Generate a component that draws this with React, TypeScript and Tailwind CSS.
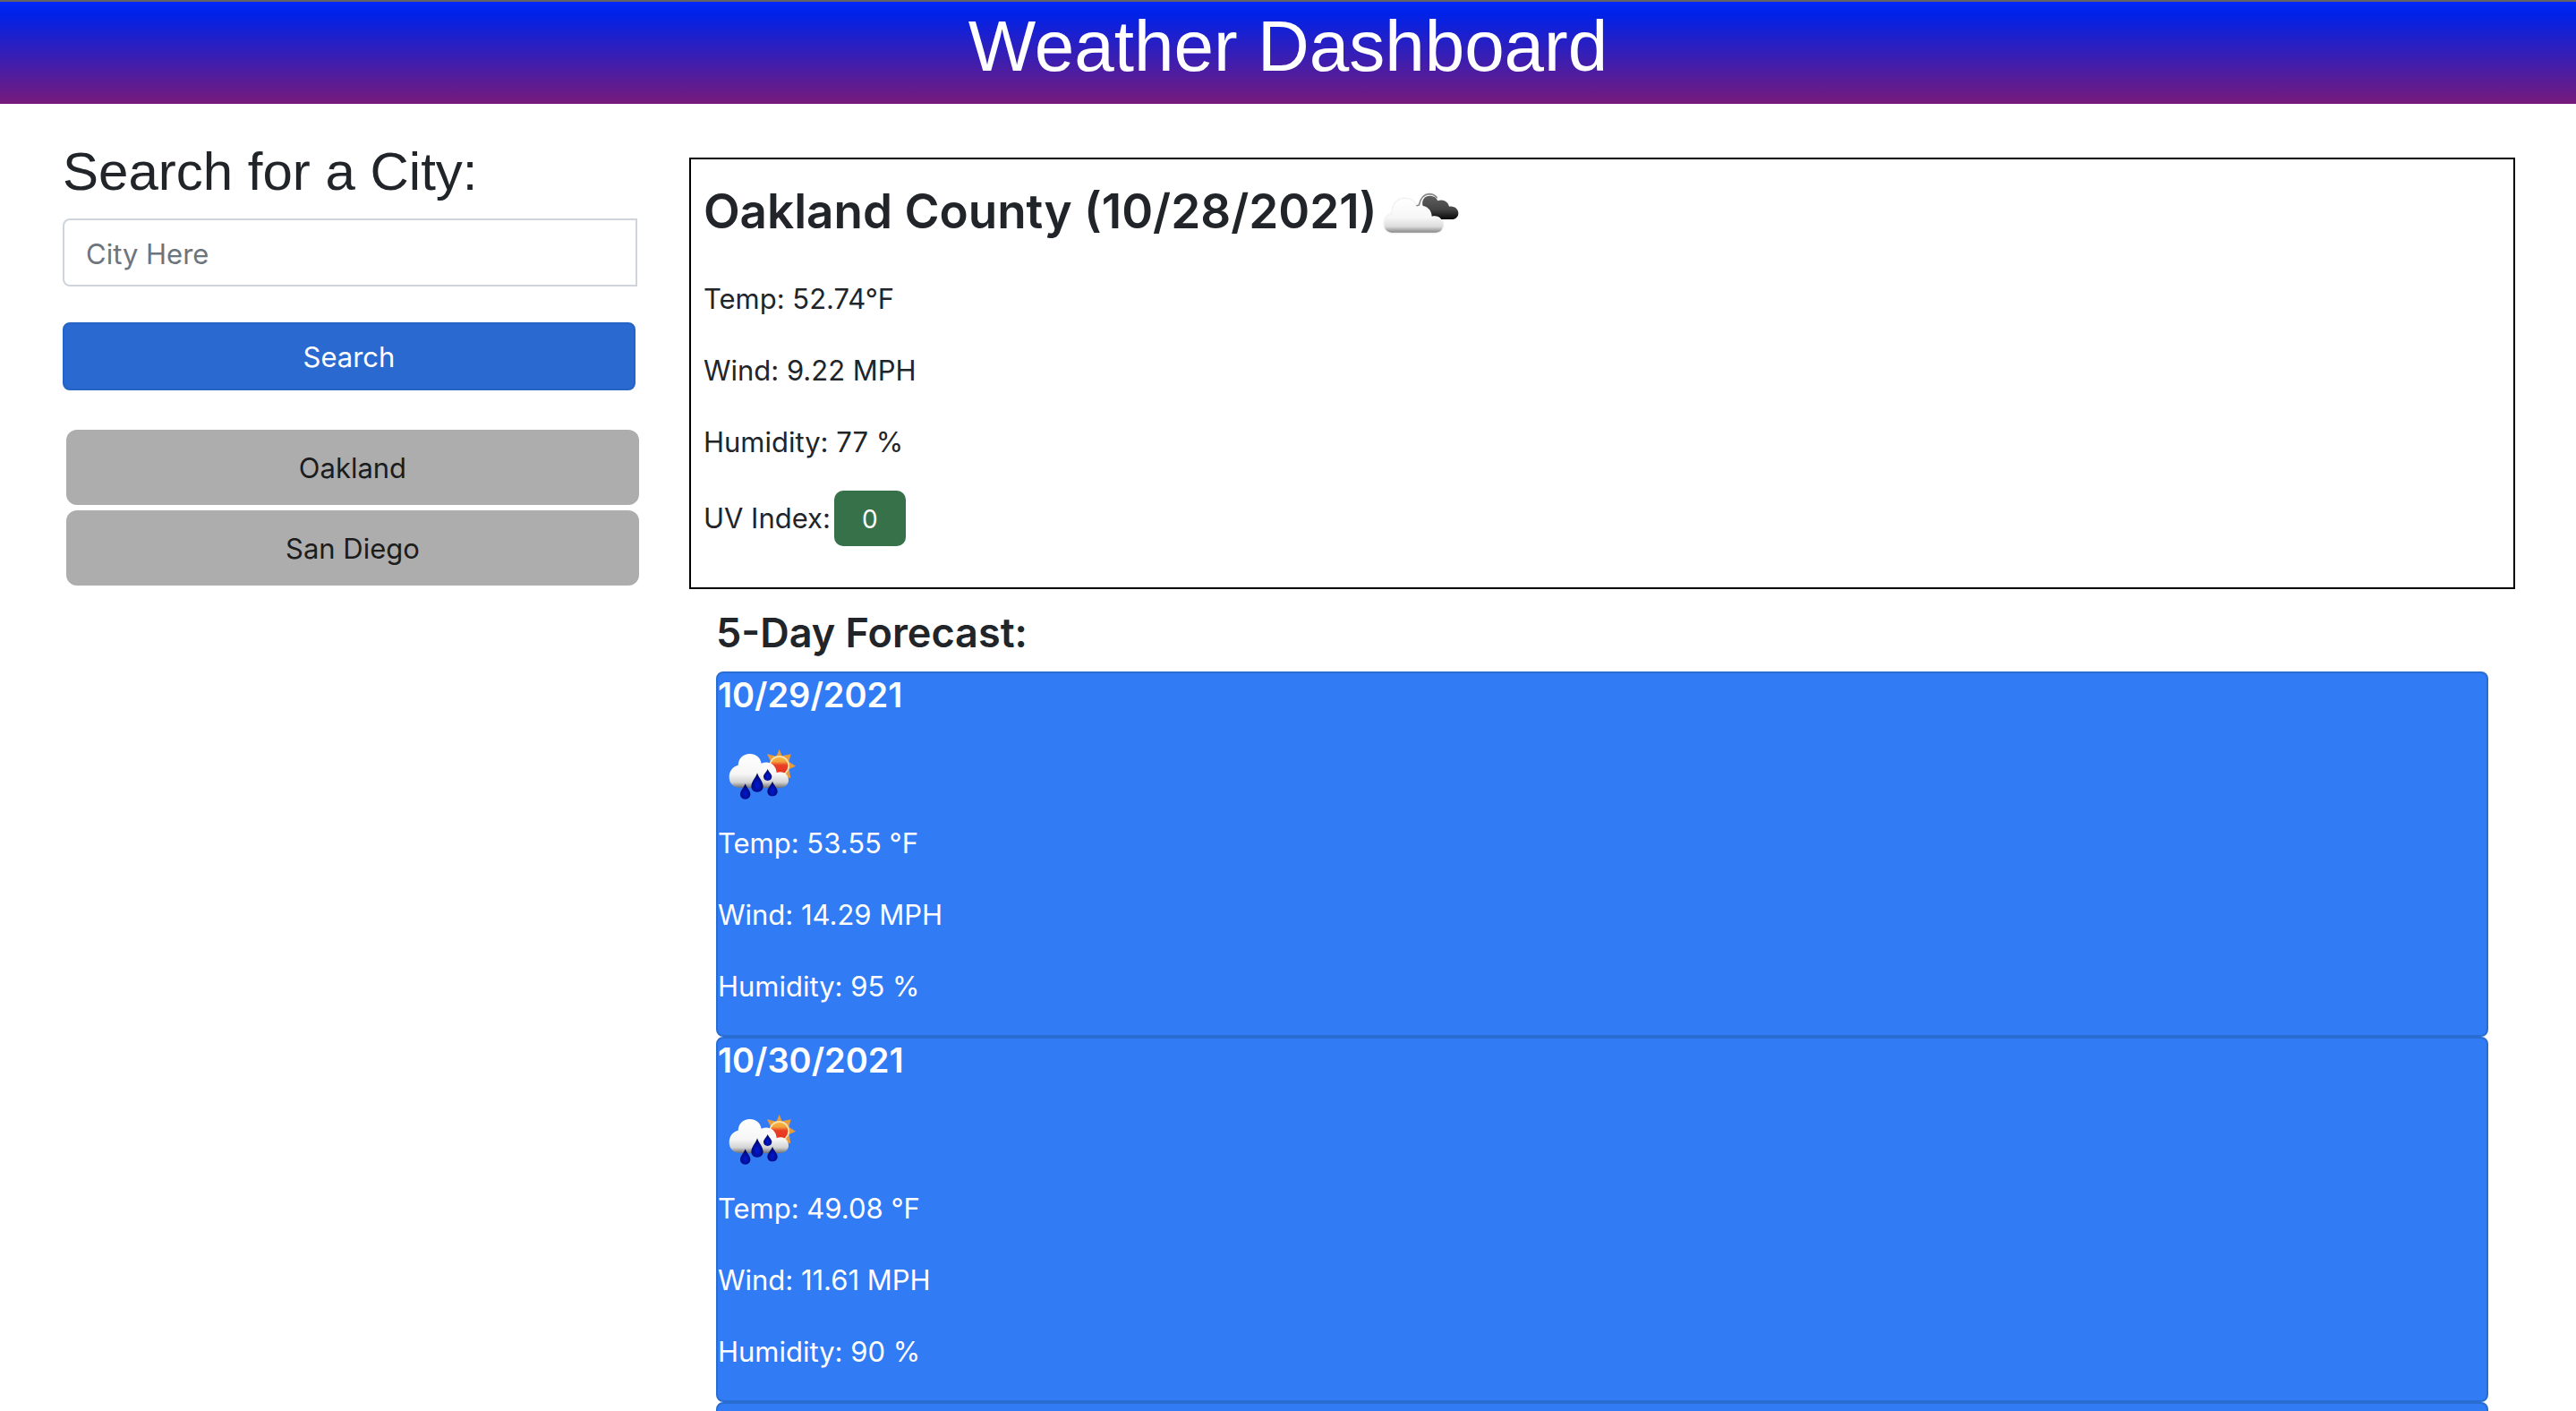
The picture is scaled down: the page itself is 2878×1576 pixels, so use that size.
import { useId } from "react";

type Day = { date: string; temp: string; wind: string; humidity: string };

const history = ["Oakland", "San Diego"];

const forecast: Day[] = [
  { date: "10/29/2021", temp: "53.55", wind: "14.29", humidity: "95" },
  { date: "10/30/2021", temp: "49.08", wind: "11.61", humidity: "90" },
  { date: "10/31/2021", temp: "50.13", wind: "13.02", humidity: "82" },
];

function BrokenClouds() {
  const id = useId();
  return (
    <svg viewBox="36 -12 300 300" className="size-[100px] shrink-0" role="img" aria-label="Broken clouds">
      <defs>
        <linearGradient id={`${id}dark`} gradientUnits="userSpaceOnUse" x1="0" y1="82" x2="0" y2="165">
          <stop offset="0" stopColor="#626262" />
          <stop offset="0.6" stopColor="#444444" />
          <stop offset="1" stopColor="#080808" />
        </linearGradient>
        <linearGradient id={`${id}light`} gradientUnits="userSpaceOnUse" x1="0" y1="95" x2="0" y2="210">
          <stop offset="0" stopColor="#ffffff" />
          <stop offset="0.55" stopColor="#f7f7f7" />
          <stop offset="0.82" stopColor="#dcdcdc" />
          <stop offset="0.94" stopColor="#a0a0a0" />
          <stop offset="1" stopColor="#868686" />
        </linearGradient>
        <filter id={`${id}halo`} x="-10%" y="-10%" width="120%" height="120%">
          <feDropShadow dx="0" dy="0" stdDeviation="2.5" floodColor="#000000" floodOpacity="0.22" />
        </filter>
      </defs>
      <path d="M168 121 L178 117 Q186 82 211 80 Q230 80 239 94" fill="none" stroke="#8a8a8a" strokeWidth="5" />
      <path
        d="M192 122 C184 100 198 86 214 86 C228 86 237 93 241 103 C258 96 276 106 279 122 C297 119 310 131 310 144 C310 157 301 165 288 165 L236 165 C218 165 218 140 192 122 Z"
        fill={`url(#${id}dark)`}
      />
      <path
        d="M88 209 C70 209 62 197 62 181 C62 163 73 150 89 147 C88 116 106 96 131 96 C150 96 164 106 170 122 C194 113 220 127 221 155 C244 149 259 165 258 183 C258 200 248 209 234 209 Z"
        fill={`url(#${id}light)`}
        filter={`url(#${id}halo)`}
      />
    </svg>
  );
}

const drops = [
  "M138 130 C143 146 158 160 158 175 C158 187 149 194 138 194 C127 194 118 187 118 175 C118 160 133 146 138 130 Z",
  "M98 166 C102 178 115 190 115 201 C115 211 108 218 98 218 C88 218 81 211 81 201 C81 190 94 178 98 166 Z",
  "M173 117 C176 126 187 134 187 142 C187 151 181 156 173 156 C165 156 159 151 159 142 C159 134 170 126 173 117 Z",
  "M189 158 C193 170 206 181 206 191 C206 201 199 208 189 208 C179 208 172 201 172 191 C172 181 185 170 189 158 Z",
];

function RainWithSun() {
  const id = useId();
  return (
    <svg viewBox="6 -12 300 300" className="size-[100px]" role="img" aria-label="Rain with sun">
      <defs>
        <linearGradient id={`${id}sun`} gradientUnits="userSpaceOnUse" x1="0" y1="74" x2="0" y2="134">
          <stop offset="0" stopColor="#f6bd3a" />
          <stop offset="0.3" stopColor="#f3a13c" />
          <stop offset="0.5" stopColor="#ea3f25" />
          <stop offset="1" stopColor="#e8321f" />
        </linearGradient>
        <linearGradient id={`${id}cloud`} gradientUnits="userSpaceOnUse" x1="0" y1="66" x2="0" y2="180">
          <stop offset="0" stopColor="#ffffff" />
          <stop offset="0.6" stopColor="#f6f6f6" />
          <stop offset="0.84" stopColor="#d2d2d2" />
          <stop offset="1" stopColor="#6f6f6f" />
        </linearGradient>
        <radialGradient id={`${id}drop`} cx="0.5" cy="0.65" r="0.55">
          <stop offset="0" stopColor="#0018d8" />
          <stop offset="0.55" stopColor="#000fa0" />
          <stop offset="1" stopColor="#020858" />
        </radialGradient>
      </defs>
      <path
        d="M212 51 L221 73 L251 67 L244 92 L267 107 L245 117 L250 148 L224 140 L180 120 L184 93 L171 67 L202 74 Z"
        fill="#e89b3c"
      />
      <circle cx="212" cy="106" r="34" fill="#f8e2ad" />
      <circle cx="212" cy="106" r="29" fill={`url(#${id}sun)`} />
      <path
        d="M78 179 C57 178 44 163 44 143 C44 124 56 108 74 104 C75 81 91 66 113 66 C134 66 149 79 152 98 C176 88 201 101 203 129 C225 121 243 134 243 154 C243 170 231 180 213 180 Z"
        fill={`url(#${id}cloud)`}
      />
      {drops.map((d) => (
        <path key={d} d={d} fill={`url(#${id}drop)`} />
      ))}
    </svg>
  );
}

function ForecastCard({ day }: { day: Day }) {
  return (
    <article className="rounded-lg border-2 border-[#2a6dd2] bg-[#317cf5] text-white">
      <h3 className="mb-4 text-[38px] leading-12 font-semibold">{day.date}</h3>
      <RainWithSun />
      <div className="flex flex-col gap-8 pt-0.5 pb-[30px]">
        <p>Temp: {day.temp} °F</p>
        <p>Wind: {day.wind} MPH</p>
        <p>Humidity: {day.humidity} %</p>
      </div>
    </article>
  );
}

export default function App() {
  return (
    <div className="h-screen overflow-hidden bg-white font-[Inter,sans-serif] text-[31px] leading-12 text-[#212529]">
      <header className="border-t-2 border-[#636363] bg-linear-to-b/srgb from-[#0028fa] via-[#0022e8] via-12% to-[#771a7a] pt-0.5 pb-4 text-center font-['Liberation_Sans',Arial,sans-serif] text-white">
        <h1 className="text-[80px] leading-24">Weather Dashboard</h1>
      </header>

      <div className="flex gap-14 pr-[68px] pl-[70px]">
        <aside className="w-[23.5%] pt-10">
          <form onSubmit={(e) => e.preventDefault()} className="flex flex-col pr-0.5">
            <label
              htmlFor="city"
              className="mb-4 font-['Liberation_Sans',Arial,sans-serif] text-[60px] leading-[72px]"
            >
              Search for a City:
            </label>
            <input
              id="city"
              type="text"
              placeholder="City Here"
              className="mb-10 h-[76px] rounded-l-lg border-2 border-[#ced4da] px-6 pt-0.5 placeholder:text-[#6c757d]"
            />
            <button
              type="submit"
              className="mr-0.5 h-[76px] rounded-lg border-2 border-[#2763c4] bg-[#2969d0] pt-0.5 text-white"
            >
              Search
            </button>
          </form>
          <div className="mt-11 flex flex-col gap-1.5 pl-1">
            {history.map((city) => (
              <button key={city} type="button" className="h-[84px] rounded-xl bg-[#adadad] pt-0.5 text-[#1c1c1c]">
                {city}
              </button>
            ))}
          </div>
        </aside>

        <main className="flex-1 pt-[60px]">
          <section className="border-2 border-black px-3.5 pt-2 pb-[46px]">
            <div className="mb-6 flex items-center">
              <h2 className="text-[53px] leading-[68px] font-semibold">Oakland County (10/28/2021)</h2>
              <BrokenClouds />
            </div>
            <p className="mb-8">Temp: 52.74°F</p>
            <p className="mb-8">Wind: 9.22 MPH</p>
            <p className="mb-[30px]">Humidity: 77 %</p>
            <p className="flex items-center gap-1">
              UV Index:
              <button type="button" className="h-[62px] w-20 rounded-[10px] bg-[#36714a] pt-0.5 text-[28px] text-white">
                0
              </button>
            </p>
          </section>

          <section className="px-[30px] pt-5">
            <h2 className="mb-3.5 text-[45px] leading-[58px] font-semibold">5-Day Forecast:</h2>
            {forecast.map((day) => (
              <ForecastCard key={day.date} day={day} />
            ))}
          </section>
        </main>
      </div>
    </div>
  );
}
